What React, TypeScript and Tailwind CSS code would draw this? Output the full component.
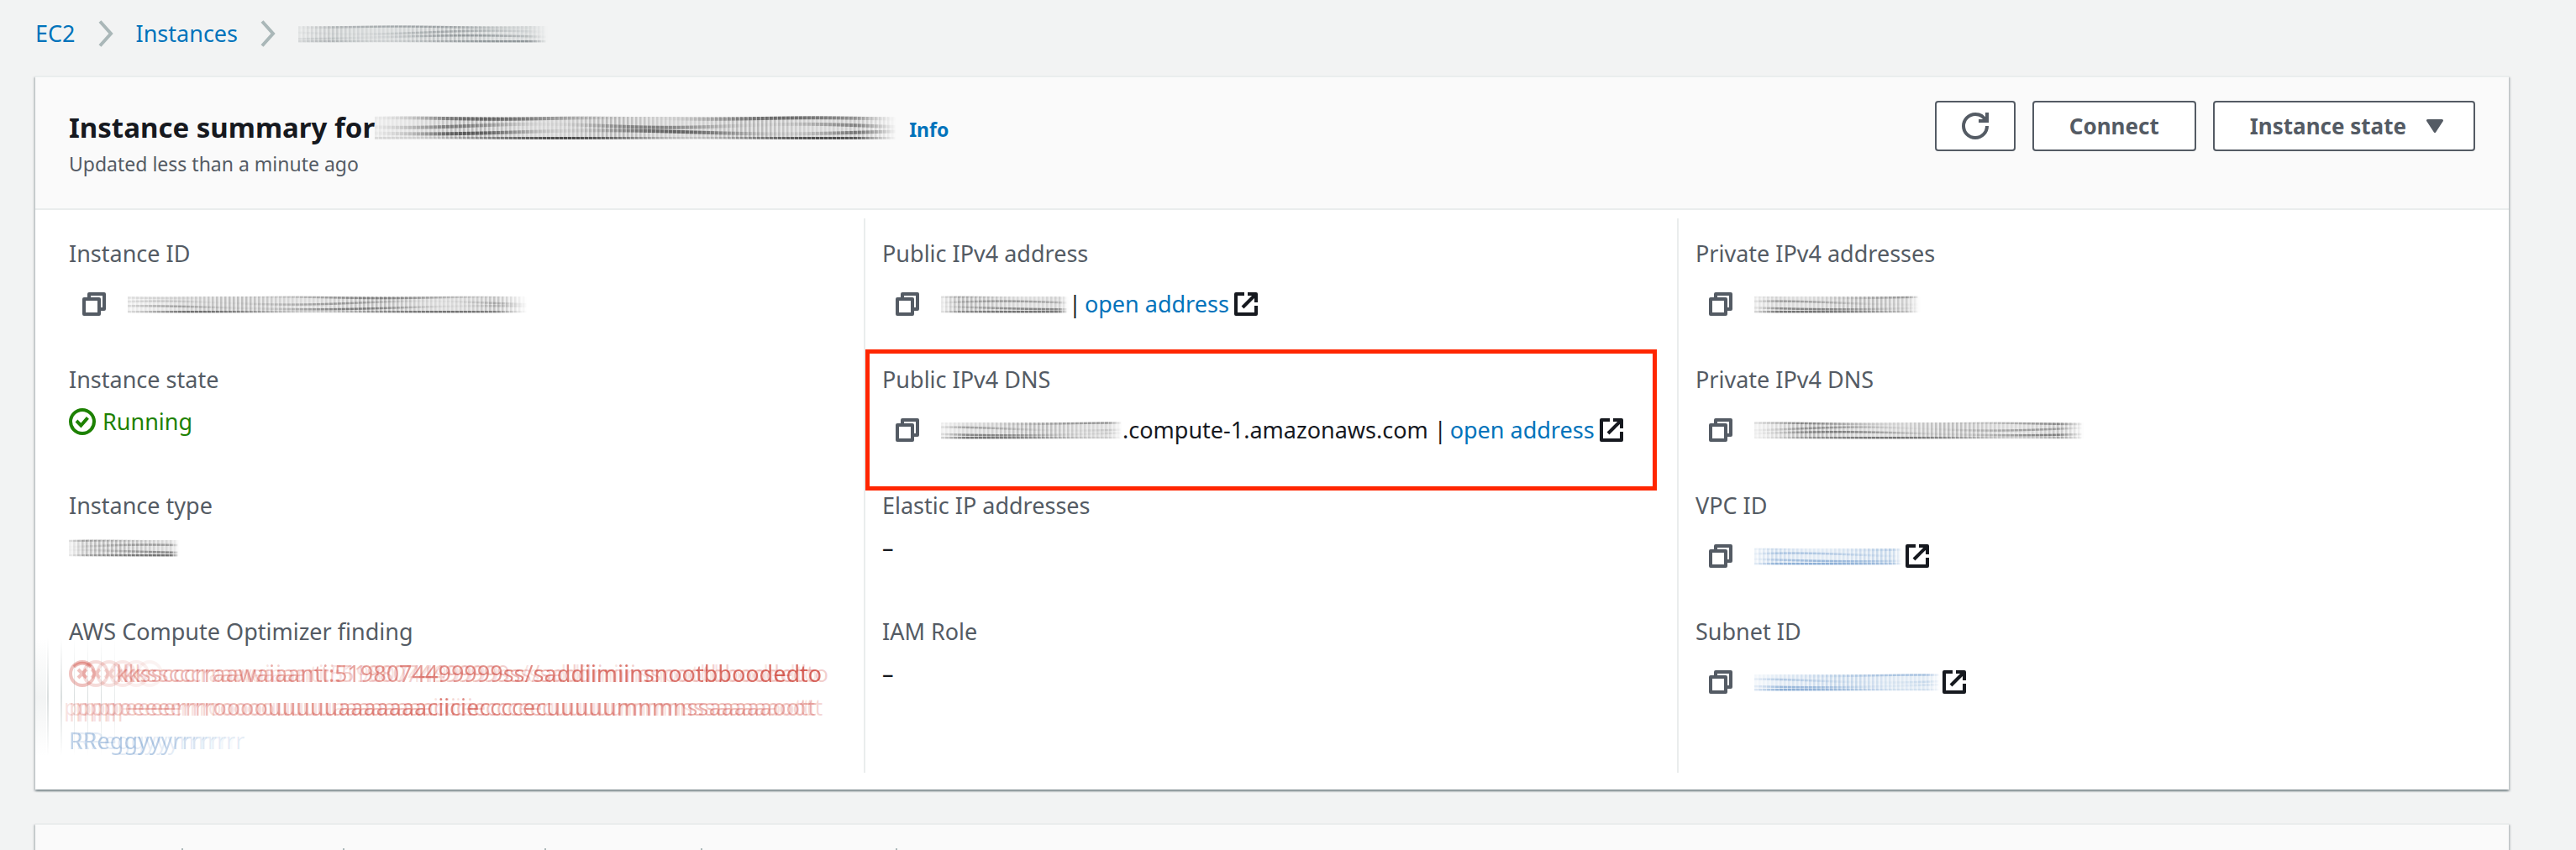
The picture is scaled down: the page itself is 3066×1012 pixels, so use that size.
import type { ReactNode } from "react";

const TAB_WIDTHS = ["w-44", "w-48", "w-60", "w-[186px]", "w-[232px]"];

function CopyIcon() {
  return (
    <svg
      viewBox="0 0 16 16"
      className="h-8 w-8"
      fill="none"
      stroke="currentColor"
      strokeWidth="2"
      strokeLinejoin="round"
      aria-hidden="true"
    >
      <path d="M2 5h9v9H2z" />
      <path d="M5 5V2h9v9h-3" />
    </svg>
  );
}

function ExternalIcon() {
  return (
    <svg
      viewBox="0 0 16 16"
      className="h-8 w-8 shrink-0 text-[#16191f]"
      fill="none"
      stroke="currentColor"
      strokeWidth="2"
      strokeLinejoin="round"
      aria-hidden="true"
    >
      <path d="M14 9v5H2V2h5" />
      <path d="M9 2h5v5" />
      <path d="M14 2l-8 8" />
    </svg>
  );
}

function RefreshIcon() {
  return (
    <svg
      viewBox="0 0 16 16"
      className="h-8 w-8"
      fill="none"
      stroke="currentColor"
      strokeWidth="2"
      aria-hidden="true"
    >
      <path d="M10 5h5V0" />
      <path d="M15 8a7 7 0 1 1-7-7 6.9 6.9 0 0 1 6.3 4" />
    </svg>
  );
}

function Chevron() {
  return (
    <svg
      viewBox="0 0 18 32"
      className="h-8 w-[18px]"
      fill="none"
      stroke="#aab7b8"
      strokeWidth="4"
      aria-hidden="true"
    >
      <path d="M2 1.5l13 14.5L2 30.5" />
    </svg>
  );
}

// A hidden value: short vertical ticks with darker streaks dragged through them.
function Smear({
  id,
  width,
  color = "#000000",
  tall = false,
}: {
  id: string;
  width: number;
  color?: string;
  tall?: boolean;
}) {
  const step = 5;
  const h = tall ? 28 : 21;
  const seed = width / 37;
  const k = tall ? 1.5 : 1.1;
  const ticks = Array.from({ length: Math.floor(width / step) }, (_, i) => {
    const t = i / 9 + seed;
    return { x: i * step, o: 0.13 + 0.06 * Math.sin(t * 1.7) };
  });
  const marks = ticks.flatMap(({ x }, i) => {
    const t = i / 8 + seed;
    return [
      { x, y: 1 + Math.sin(t) * 0.8, o: 0.16 + 0.16 * Math.sin(t * 0.7) },
      { x, y: h * 0.35 + Math.sin(t * 0.8) * 2, o: 0.14 + 0.12 * Math.cos(t) },
      { x, y: h * 0.62 - Math.sin(t * 0.6) * 2, o: 0.2 + 0.16 * Math.sin(t + 1) },
      { x, y: h - 3, o: 0.26 + 0.18 * Math.cos(t * 0.8 + 1) },
    ];
  });
  return (
    <svg
      width={width}
      height={h}
      viewBox={`0 0 ${width} ${h}`}
      className="shrink-0"
      role="img"
      aria-label="hidden"
    >
      <defs>
        <linearGradient id={`${id}-fade`}>
          <stop offset="0" stopColor="#fff" stopOpacity="0.3" />
          <stop offset="0.14" stopColor="#fff" />
          <stop offset="0.92" stopColor="#fff" />
          <stop offset="1" stopColor="#fff" stopOpacity="0" />
        </linearGradient>
        <mask id={`${id}-mask`}>
          <rect width={width} height={h} fill={`url(#${id}-fade)`} />
        </mask>
      </defs>
      <g mask={`url(#${id}-mask)`} fill={color}>
        <rect y="1" width={width} height={h - 2} opacity="0.08" />
        {ticks.map((t) => (
          <rect key={t.x} x={t.x} y="1" width={step / 2} height={h - 2} opacity={t.o} />
        ))}
        {marks.map((m, i) => (
          <rect
            key={i}
            x={m.x}
            y={m.y}
            width={step - 0.5}
            height={tall ? 4 : 2.5}
            opacity={Math.max(0, m.o * k)}
          />
        ))}
      </g>
    </svg>
  );
}

function Field({
  label,
  highlight = false,
  children,
}: {
  label: string;
  highlight?: boolean;
  children: ReactNode;
}) {
  return (
    <div className="relative min-h-[150px]">
      <dt className="leading-[44px] text-[#545b64]">{label}</dt>
      <dd className="mt-1.5 leading-[44px]">{children}</dd>
      {highlight && (
        <div className="pointer-events-none absolute -top-3.5 right-6 -bottom-1 -left-5 border-[5px] border-[#ff2600]" />
      )}
    </div>
  );
}

function CopyRow({ label, children }: { label: string; children: ReactNode }) {
  return (
    <div className="flex h-16 items-center">
      <button aria-label={`Copy ${label}`} className="mr-6 ml-3.5 text-[#545b64]">
        <CopyIcon />
      </button>
      {children}
    </div>
  );
}

function OpenAddress() {
  return (
    <a href="#" className="ml-1 flex items-center gap-1 text-[#0073bb]">
      open address
      <ExternalIcon />
    </a>
  );
}

function OptimizerFinding() {
  return (
    <div className="relative pt-0.5 leading-10 whitespace-nowrap">
      <svg
        viewBox="0 0 130 140"
        className="absolute -top-5 -left-16 h-[140px] w-[130px]"
        aria-hidden="true"
      >
        <defs>
          <linearGradient id="drag-v" x1="0" y1="0" x2="0" y2="1">
            <stop offset="0" stopColor="#879596" stopOpacity="0" />
            <stop offset="0.5" stopColor="#879596" stopOpacity="0.3" />
            <stop offset="1" stopColor="#879596" stopOpacity="0" />
          </linearGradient>
        </defs>
        <rect x="24" width="13" height="140" fill="url(#drag-v)" opacity="0.35" />
        <rect x="38" width="2" height="140" fill="url(#drag-v)" />
        <rect x="54" width="2" height="140" fill="url(#drag-v)" />
        <rect x="70" width="1" height="140" fill="url(#drag-v)" />
        <rect x="86" width="1" height="140" fill="url(#drag-v)" />
        <rect x="102" width="1" height="140" fill="url(#drag-v)" />
        <rect x="118" width="1" height="140" fill="url(#drag-v)" opacity="0.6" />
      </svg>
      <p className="flex items-center [text-shadow:8px_0_rgb(200_40_28/0.22),-5px_0_rgb(200_40_28/0.14)]">
        <svg
          viewBox="0 0 56 32"
          className="h-8 w-14 shrink-0 overflow-visible"
          fill="none"
          stroke="#c8281c"
          strokeWidth="4"
          aria-hidden="true"
        >
          <path d="M6 8a14 14 0 0 1 20 0" opacity="0.3" />
          {[0.28, 0.16, 0.13, 0.1, 0.07, 0.05].map((o, i) => (
            <g key={i} opacity={o}>
              <circle cx={16 + i * 16} cy="16" r="14" />
              <path d={`M${11 + i * 16} 11l10 10m0-10l-10 10`} />
            </g>
          ))}
        </svg>
        <span className="bg-gradient-to-r from-[#c8281c]/30 via-[#c8281c]/50 to-[#c8281c]/70 bg-clip-text text-transparent">
          kksscccrraawaiaanti:5198074499999ss/saddiimiinsnootbboodedto
        </span>
      </p>
      <p>
        <span className="bg-gradient-to-r from-[#c8281c]/15 via-[#c8281c]/55 to-[#c8281c]/30 bg-clip-text text-transparent [text-shadow:8px_0_rgb(200_40_28/0.2),-6px_0_rgb(200_40_28/0.14)]">
          ppppeeeerrrroooouuuuuaaaaaaaciicieccccecuuuuumnmnssaaaaaoott
        </span>
      </p>
      <p>
        <span className="bg-gradient-to-r from-[#2f6db5]/30 via-[#2f6db5]/35 to-[#2f6db5]/0 bg-clip-text text-transparent [text-shadow:8px_0_rgb(47_109_181/0.12)]">
          RReggyyyrrrrrrr
        </span>
      </p>
    </div>
  );
}

export default function App() {
  return (
    <div className="flex h-screen flex-col overflow-hidden bg-[#f2f3f3] pr-20 pl-[42px] font-['Noto_Sans',sans-serif] text-[27px] text-[#16191f]">
      <nav aria-label="Breadcrumb" className="pt-[18px] pb-7">
        <ol className="flex h-11 items-center gap-[27px]">
          <li>
            <a href="#" className="text-[#0073bb]">
              EC2
            </a>
          </li>
          <li>
            <Chevron />
          </li>
          <li>
            <a href="#" className="text-[#0073bb]">
              Instances
            </a>
          </li>
          <li>
            <Chevron />
          </li>
          <li>
            <Smear id="crumb" width={298} color="#3f4a50" />
          </li>
        </ol>
      </nav>

      <section className="bg-white shadow-[0_2px_2px_rgba(0,28,36,0.3),2px_2px_2px_rgba(0,28,36,0.15),-2px_2px_2px_rgba(0,28,36,0.15)]">
        <header className="flex items-start justify-between border-y-2 border-[#eaeded] bg-[#fafafa] px-10 pt-7 pb-[35px]">
          <div className="pt-2.5">
            <div className="flex h-11 items-center">
              <h1 className="text-[33px] font-bold">Instance summary for</h1>
              <Smear id="title" width={622} tall />
              <a href="#" className="ml-3.5 pt-1 text-[23px] font-bold text-[#0073bb]">
                Info
              </a>
            </div>
            <p className="mt-[3px] text-[23px] leading-9 text-[#545b64]">
              Updated less than a minute ago
            </p>
          </div>
          <div className="flex gap-5 text-[26px] font-bold text-[#545b64]">
            <button
              aria-label="Refresh"
              className="flex h-[60px] items-center rounded border-2 border-[#545b64] bg-white px-[30px]"
            >
              <RefreshIcon />
            </button>
            <button className="flex h-[60px] items-center rounded border-2 border-[#545b64] bg-white px-[42px]">
              Connect
            </button>
            <button className="flex h-[60px] items-center gap-6 rounded border-2 border-[#545b64] bg-white pr-9 pl-[42px]">
              Instance state
              <svg viewBox="0 0 20 16" className="h-4 w-5" aria-hidden="true">
                <path
                  d="M1.5 1.5h17L10 14.5z"
                  fill="currentColor"
                  stroke="currentColor"
                  strokeWidth="3"
                  strokeLinejoin="round"
                />
              </svg>
            </button>
          </div>
        </header>

        <div className="grid grid-cols-3 px-5 pt-2.5 pb-5">
          <dl className="border-r-2 border-[#eaeded] pt-5 pl-5">
            <Field label="Instance ID">
              <CopyRow label="instance ID">
                <Smear id="instance-id" width={476} />
              </CopyRow>
            </Field>
            <Field label="Instance state">
              <span className="flex items-center gap-2 text-[#1d8102]">
                <svg
                  viewBox="0 0 16 16"
                  className="h-8 w-8"
                  fill="none"
                  stroke="currentColor"
                  strokeWidth="2"
                  aria-hidden="true"
                >
                  <circle cx="8" cy="8" r="7" />
                  <path d="M4.5 7.5l2.7 2.8 4-4.6" />
                </svg>
                Running
              </span>
            </Field>
            <Field label="Instance type">
              <span className="flex h-11 items-center">
                <Smear id="type" width={132} />
              </span>
            </Field>
            <Field label="AWS Compute Optimizer finding">
              <OptimizerFinding />
            </Field>
          </dl>

          <dl className="border-r-2 border-[#eaeded] pt-5 pb-10 pl-5">
            <Field label="Public IPv4 address">
              <CopyRow label="public IPv4 address">
                <Smear id="public-ip" width={152} />
                <span>|</span>
                <OpenAddress />
              </CopyRow>
            </Field>
            <Field label="Public IPv4 DNS" highlight>
              <CopyRow label="public IPv4 DNS">
                <Smear id="public-dns" width={216} />
                <span>.compute-1.amazonaws.com |</span>
                <OpenAddress />
              </CopyRow>
            </Field>
            <Field label="Elastic IP addresses">–</Field>
            <Field label="IAM Role">–</Field>
          </dl>

          <dl className="pt-5 pl-5">
            <Field label="Private IPv4 addresses">
              <CopyRow label="private IPv4 addresses">
                <Smear id="private-ip" width={198} />
              </CopyRow>
            </Field>
            <Field label="Private IPv4 DNS">
              <CopyRow label="private IPv4 DNS">
                <Smear id="private-dns" width={394} />
              </CopyRow>
            </Field>
            <Field label="VPC ID">
              <CopyRow label="VPC ID">
                <a href="#" aria-label="Open VPC" className="flex items-center">
                  <Smear id="vpc" width={178} color="#2f6db5" />
                  <ExternalIcon />
                </a>
              </CopyRow>
            </Field>
            <Field label="Subnet ID">
              <CopyRow label="subnet ID">
                <a href="#" aria-label="Open subnet" className="flex items-center">
                  <Smear id="subnet" width={222} color="#2f6db5" />
                  <ExternalIcon />
                </a>
              </CopyRow>
            </Field>
          </dl>
        </div>
      </section>

      <section className="mt-10 flex flex-1 border-t-2 border-[#eaeded] bg-[#fafafa] pt-7 shadow-[0_2px_2px_rgba(0,28,36,0.3),2px_2px_2px_rgba(0,28,36,0.15),-2px_2px_2px_rgba(0,28,36,0.15)]">
        {TAB_WIDTHS.map((w) => (
          <div key={w} className={`${w} border-r-2 border-[#aab7b8]`} />
        ))}
      </section>
    </div>
  );
}
